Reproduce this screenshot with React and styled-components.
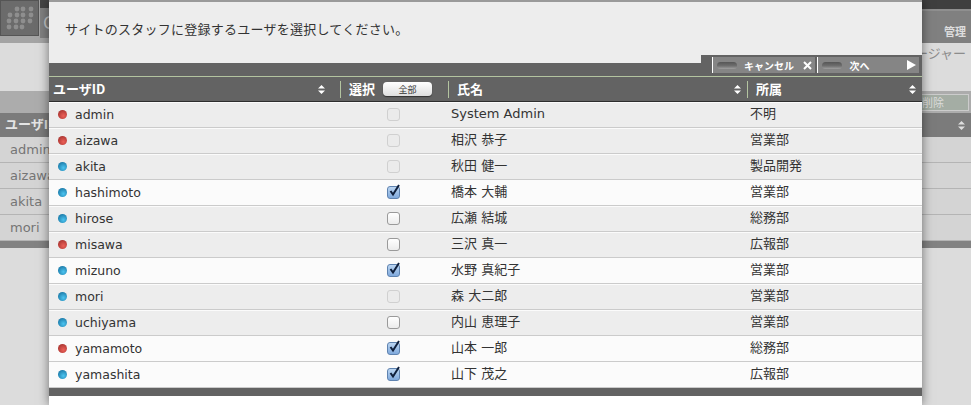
import React from "react";
import styled, { createGlobalStyle } from "styled-components";

const Global = createGlobalStyle`
  html, body { margin: 0; padding: 0; background: #dcdcdc; }
  body { width: 971px; height: 405px; overflow: hidden; font-family: "DejaVu Sans", "Noto Sans CJK JP", sans-serif; }
`;
const CJK = `"Open Sans", "Noto Sans CJK JP", sans-serif`;

const Page = styled.div`
  position: relative;
  width: 971px;
  height: 405px;
  overflow: hidden;
  background: #dcdcdc;
  font-family: ${CJK};
`;
const BackTop = styled.div`
  height: 43px;
  background: #a4a4a4;
  display: flex;
  justify-content: space-between;
`;
const Tile = styled.div`
  width: 39px;
  height: 36px;
  background: #6b6b6b;
  border: 1px solid #555;
  box-sizing: border-box;
  display: flex;
`;
const LeftTab = styled.div`
  width: 10px;
  height: 38px;
  margin-left: 1px;
  flex: none;
  overflow: hidden;
  padding-left: 3px;
  box-sizing: border-box;
  background: linear-gradient(#454545 0 8px, #808080 8px);
  color: #c4c4c4;
  font-size: 18px;
  line-height: 45px;
`;
const BackLeft = styled.div`
  display: flex;
`;
const BackTabs = styled.div`
  width: 49px;
  height: 43px;
  display: flex;
  align-items: flex-end;
  justify-content: flex-end;
  padding: 0 5px 4px 0;
  box-sizing: border-box;
  background: linear-gradient(#3f3f3f 0 9px, #8f8f8f 9px 11px, #808080 11px);
  font-size: 11px;
  font-weight: 700;
  color: #ddd;
  font-family: "Noto Sans CJK JP", sans-serif;
`;
const BackTitle = styled.div`
  height: 48px;
  display: flex;
  justify-content: flex-end;
  padding: 0 5px 0 0;
  box-sizing: border-box;
  font-size: 13px;
  line-height: 20px;
  color: #8c8c8c;
  background: #dcdcdc;
`;
const BackBar = styled.div`
  height: 22px;
  background: #acacac;
  display: flex;
  justify-content: flex-end;
  align-items: center;
  padding-right: 2px;
  box-sizing: border-box;
`;
const BackDelete = styled.div`
  width: 48px;
  height: 17px;
  border: 1px solid #ccc;
  background: #a4ada4;
  color: #ddd;
  font-size: 11px;
  box-sizing: border-box;
  line-height: 15px;
`;
const BackHead = styled.div`
  height: 24px;
  box-sizing: border-box;
  background: #7b7b7b;
  color: #e4e4e4;
  font-size: 13px;
  font-weight: 700;
  padding: 0 6px 0 5px;
  display: flex;
  justify-content: space-between;
  align-items: center;
`;
const BackHeadLabel = styled.span`
  margin-top: -4px;
`;
const BackRow = styled.div`
  height: 26px;
  box-sizing: border-box;
  background: #d4d4d4;
  border-bottom: 1px solid #b4b4b4;
  color: #757575;
  font-family: "DejaVu Sans", sans-serif;
  font-size: 13px;
  line-height: 25px;
  padding-left: 10px;
`;
const BackEnd = styled.div`
  height: 7px;
  background: #828282;
`;

const Modal = styled.div`
  position: absolute;
  left: 49px;
  top: 0;
  width: 873px;
  height: 405px;
  background: #fff;
  box-shadow: 0 0 10px rgba(0, 0, 0, 0.5);
  display: flex;
  flex-direction: column;
`;
const Message = styled.div`
  height: 63px;
  box-sizing: border-box;
  border-top: 2px solid #9a9a9a;
  background: #ededed;
  padding: 18px 0 0 16px;
  font-size: 13px;
  line-height: 18px;
  letter-spacing: 0.25px;
  color: #333;
  font-family: "Noto Sans CJK JP", sans-serif;
`;
const ActionStrip = styled.div`
  height: 13px;
  background: #636363;
  position: relative;
  border-bottom: 1px solid #b3c4a0;
`;
const Actions = styled.div`
  position: absolute;
  left: 652px;
  right: 0;
  top: -8px;
  height: 21px;
  background: #636363;
  display: flex;
  padding: 2px 3px 0 11px;
  gap: 2px;
  box-sizing: border-box;
`;
const ActionButton = styled.div`
  flex: ${(p) => p.$w} 0 0;
  height: 16px;
  background: #858585;
  border-left: 1px solid #fff;
  display: flex;
  align-items: center;
  padding: 0 3px 0 4px;
  box-sizing: border-box;
  color: #fff;
  font-size: 10px;
  font-weight: 700;
  font-family: "Noto Sans CJK JP", sans-serif;
`;
const Pill = styled.span`
  width: 20px;
  height: 7px;
  border-radius: 4px;
  background: linear-gradient(#565656, #6e6e6e 55%, #a0a0a0);
  margin-right: 7px;
  flex: none;
`;
const ActionLabel = styled.span`
  flex: 1;
`;
const Header = styled.div`
  display: grid;
  grid-template-columns: 291px 108px 299px 175px;
  height: 24px;
  background: #636363;
  border-bottom: 1px solid #2e2e2e;
  color: #fff;
  font-size: 13px;
  font-weight: 700;
  font-family: "Noto Sans CJK JP", sans-serif;
`;
const HeadCell = styled.div`
  display: flex;
  align-items: center;
  justify-content: space-between;
  padding: 0 ${(p) => p.$right || 6}px 0 ${(p) => p.$left || 9}px;
  position: relative;
  &::before {
    content: "";
    display: ${(p) => (p.$first ? "none" : "block")};
    position: absolute;
    left: 0;
    top: 4px;
    height: 17px;
    width: 1px;
    background: #b3c4a0;
  }
`;
const HeadText = styled.span`
  margin-top: -2px;
`;
const HeadGroup = styled.span`
  display: flex;
  align-items: center;
  gap: 8px;
`;
const AllButton = styled.span`
  width: 49px;
  height: 14px;
  border-radius: 4px;
  background: linear-gradient(#fff, #dedede);
  color: #333;
  font-size: 9px;
  font-weight: 400;
  line-height: 15px;
  text-align: center;
  box-shadow: 0 1px 1px rgba(0, 0, 0, 0.5);
`;
const Row = styled.div`
  display: grid;
  grid-template-columns: 291px 108px 299px 175px;
  height: 26px;
  box-sizing: border-box;
  align-items: center;
  background: ${(p) => (p.$on ? "#fbfbfb" : "#ededed")};
  border-top: 1px solid #fbfbfb;
  border-bottom: 1px solid #cbcbcb;
  padding-bottom: 2px;
  color: #333;
  font-size: 13px;
`;
const IdCell = styled.div`
  display: flex;
  align-items: center;
  padding-left: 9px;
  gap: 8px;
  font-family: "DejaVu Sans", sans-serif;
  font-size: 12.5px;
`;
const Dot = styled.span`
  width: 9px;
  height: 9px;
  border-radius: 50%;
  background: ${(p) =>
    p.$red
      ? "radial-gradient(circle at 60% 65%, #ec6058, #a83430 80%)"
      : "radial-gradient(circle at 60% 65%, #4cc4f0, #1a78a6 80%)"};
`;
const CheckCell = styled.div`
  display: flex;
  justify-content: center;
  padding-right: 2px;
`;
const Check = styled.span`
  width: 13px;
  height: 13px;
  box-sizing: border-box;
  border-radius: 3px;
  position: relative;
  border: 1px solid ${(p) => (p.$off ? "#d0d0d0" : p.$on ? "#5f83b0" : "#9a9a9a")};
  background: ${(p) =>
    p.$off ? "#ebebeb" : p.$on ? "linear-gradient(#bcd6f2, #7fa9dc)" : "linear-gradient(#fff, #ececec)"};
`;
const Mark = styled.svg`
  position: absolute;
  left: 0;
  top: -3px;
  width: 13px;
  height: 13px;
`;
const TextCell = styled.div`
  padding-left: 3px;
  font-family: "DejaVu Sans", "Noto Sans CJK JP", sans-serif;
  font-size: 13px;
  line-height: 16px;
  white-space: nowrap;
`;
const FooterBar = styled.div`
  height: 8px;
  background: #636363;
`;

const SortIcon = ({ color = "#fff" }) => (
  <svg width="7" height="9" viewBox="0 0 7 9">
    <path d="M3.5 0 7 3.6H0zM0 5.4h7L3.5 9z" fill={color} />
  </svg>
);
const tileDots = [
  [16, 8], [22, 8], [30, 8],
  [9, 14], [16, 14], [22, 14], [30, 14],
  [8, 20], [15, 20], [22, 20], [29, 20],
  [8, 26], [15, 26], [21, 26],
];
const TileIcon = () => (
  <svg width="37" height="34" viewBox="0 0 37 34">
    {tileDots.map(([x, y]) => (
      <circle key={x + "-" + y} cx={x} cy={y} r="2.4" fill="#8e8e8e" />
    ))}
  </svg>
);

const rows = [
  ["admin", "System Admin", "不明", "red", "off"],
  ["aizawa", "相沢 恭子", "営業部", "red", "off"],
  ["akita", "秋田 健一", "製品開発", "blue", "off"],
  ["hashimoto", "橋本 大輔", "営業部", "blue", "on"],
  ["hirose", "広瀬 結城", "総務部", "blue", ""],
  ["misawa", "三沢 真一", "広報部", "red", ""],
  ["mizuno", "水野 真紀子", "営業部", "blue", "on"],
  ["mori", "森 大二郎", "営業部", "blue", "off"],
  ["uchiyama", "内山 恵理子", "営業部", "blue", ""],
  ["yamamoto", "山本 一郎", "総務部", "red", "on"],
  ["yamashita", "山下 茂之", "広報部", "blue", "on"],
];

export default function App() {
  return (
    <Page>
      <Global />
      <BackTop>
        <BackLeft>
          <Tile>
            <TileIcon />
          </Tile>
          <LeftTab>C</LeftTab>
        </BackLeft>
        <BackTabs>管理</BackTabs>
      </BackTop>
      <BackTitle>ージャー</BackTitle>
      <BackBar>
        <BackDelete>削除</BackDelete>
      </BackBar>
      <BackHead>
        <BackHeadLabel>ユーザID</BackHeadLabel>
        <SortIcon color="#ddd" />
      </BackHead>
      {["admin", "aizawa", "akita", "mori"].map((n) => (
        <BackRow key={n}>{n}</BackRow>
      ))}
      <BackEnd />
      <Modal>
        <Message>サイトのスタッフに登録するユーザを選択してください。</Message>
        <ActionStrip>
          <Actions>
            <ActionButton $w={104}>
              <Pill />
              <ActionLabel>キャンセル</ActionLabel>
              <svg width="9" height="9" viewBox="0 0 9 9">
                <path d="M1 1 8 8M8 1 1 8" stroke="#fff" strokeWidth="2" />
              </svg>
            </ActionButton>
            <ActionButton $w={102}>
              <Pill />
              <ActionLabel>次へ</ActionLabel>
              <svg width="9" height="10" viewBox="0 0 9 10">
                <path d="M0 0 9 5 0 10z" fill="#fff" />
              </svg>
            </ActionButton>
          </Actions>
        </ActionStrip>
        <Header>
          <HeadCell $first $left={4} $right={15}>
            <HeadText>ユーザID</HeadText>
            <SortIcon />
          </HeadCell>
          <HeadCell>
            <HeadGroup>
              <HeadText>選択</HeadText>
              <AllButton>全部</AllButton>
            </HeadGroup>
          </HeadCell>
          <HeadCell>
            <HeadText>氏名</HeadText>
            <SortIcon />
          </HeadCell>
          <HeadCell>
            <HeadText>所属</HeadText>
            <SortIcon />
          </HeadCell>
        </Header>
        {rows.map(([id, name, dept, color, state]) => (
          <Row key={id} $on={state === "on"}>
            <IdCell>
              <Dot $red={color === "red"} />
              {id}
            </IdCell>
            <CheckCell>
              <Check $on={state === "on"} $off={state === "off"}>
                {state === "on" && (
                  <Mark viewBox="0 0 13 13">
                    <path d="M2.5 7 5 10.5 11 1" fill="none" stroke="#10203c" strokeWidth="2" />
                  </Mark>
                )}
              </Check>
            </CheckCell>
            <TextCell>{name}</TextCell>
            <TextCell>{dept}</TextCell>
          </Row>
        ))}
        <FooterBar />
      </Modal>
    </Page>
  );
}
